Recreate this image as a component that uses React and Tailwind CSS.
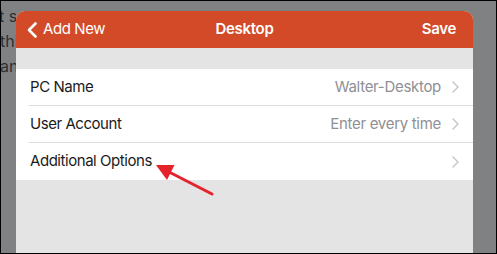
import React from "react";

function Chevron() {
  return (
    <svg width="7" height="12" viewBox="0 0 7 12" className="shrink-0">
      <polyline points="1,1 6,6 1,11" fill="none" stroke="#c4c4c8" strokeWidth="1.4" strokeLinecap="round" strokeLinejoin="round" />
    </svg>
  );
}

function Row({ label, value, last }) {
  return (
    <div className="pl-[13px] bg-white">
      <div className={`h-[37px] flex items-center pl-[1px] pr-[14px] ${last ? "" : "border-b border-[#dcdcdc]"}`}>
        <span className="text-[15px] text-[#1b1b1b] tracking-[-0.45px]">{label}</span>
        <span className="ml-auto text-[15px] text-[#8f8f94] mr-[11px] tracking-[-0.3px]">{value}</span>
        <Chevron />
      </div>
    </div>
  );
}

export default function App() {
  return (
    <div className="w-[497px] h-[254px] border border-black bg-[#808183] relative overflow-hidden font-['Inter',sans-serif]">
      <div className="w-[15px] overflow-hidden text-[#2e2f31] text-[16px] leading-[25px] pt-[3px] whitespace-nowrap">
        <div className="-ml-[2px]">t st</div>
        <div className="-ml-[1px]">thi</div>
        <div className="-ml-[1px]">anc</div>
      </div>

      <div className="absolute left-[15px] top-[10px] w-[457px] bottom-0 bg-[#e4e4e4] rounded-t-[9px] overflow-hidden flex flex-col">
        <div className="h-[37px] bg-[#d24a27] grid grid-cols-[1fr_auto_1fr] items-center text-white text-[15px]">
          <div className="flex items-center pl-[11px]">
            <svg width="10" height="16" viewBox="0 0 10 16" className="mr-[6px]">
              <polyline points="8.5,1.5 2,8 8.5,14.5" fill="none" stroke="white" strokeWidth="2.6" strokeLinecap="round" strokeLinejoin="round" />
            </svg>
            <span className="tracking-[-0.4px]">Add New</span>
          </div>
          <div className="font-semibold tracking-[-0.3px]">Desktop</div>
          <div className="text-right pr-[17px] font-semibold tracking-[-0.3px]">Save</div>
        </div>
        <div className="h-[21px]" />
        <Row label="PC Name" value="Walter-Desktop" />
        <Row label="User Account" value="Enter every time" />
        <Row label="Additional Options" value="" last />
      </div>

      <svg className="absolute left-[-1px] top-[-1px] pointer-events-none" width="497" height="254" viewBox="0 0 497 254">
        <line x1="212" y1="194" x2="171" y2="173" stroke="#e5232a" strokeWidth="3" strokeLinecap="round" />
        <polygon points="156,165 174.5,165 167,180" fill="#e5232a" />
      </svg>
    </div>
  );
}
